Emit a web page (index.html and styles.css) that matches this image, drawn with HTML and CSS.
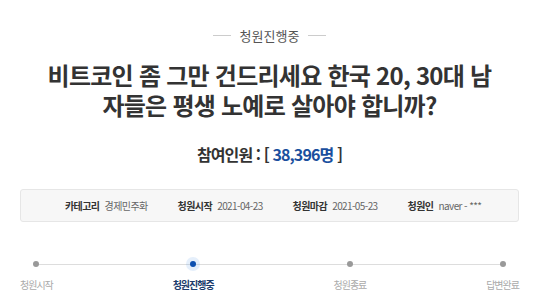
FILE: index.html
```html
<!DOCTYPE html>
<html lang="ko">
<head>
  <meta charset="UTF-8">
  <title>청원진행중</title>
  <link rel="stylesheet" href="styles.css">
</head>
<body>
  <div class="petition">
    <div class="status"><span>청원진행중</span></div>

    <h1 class="title">비트코인 좀 그만 건드리세요 한국 20, 30대 남<br>자들은 평생 노예로 살아야 합니까?</h1>

    <div class="count">참여인원 : [ <span class="num">38,396명</span> ]</div>

    <ul class="info">
      <li><b>카테고리</b> 경제민주화</li>
      <li><b>청원시작</b> 2021-04-23</li>
      <li><b>청원마감</b> 2021-05-23</li>
      <li><b>청원인</b> naver - ***</li>
    </ul>

    <ol class="steps">
      <li>청원시작</li>
      <li class="on">청원진행중</li>
      <li>청원종료</li>
      <li>답변완료</li>
    </ol>
  </div>
</body>
</html>
```

FILE: styles.css
```css
body {
  margin: 0;
  background: #fff;
  color: #333;
  font-family: 'Noto Sans CJK KR', 'Noto Sans', sans-serif;
}

.petition {
  width: 499px;
  margin: 0 22px 0 20px;
  padding-top: 26px;
}

/* status badge with rules on both sides */
.status {
  display: flex;
  justify-content: center;
  align-items: center;
  gap: 9px;
  font-size: 13px;
  color: #555;
  height: 18px;
}

.status::before,
.status::after {
  content: '';
  width: 18px;
  height: 1px;
  background: #ccc;
}

.title {
  margin: 16px 0 0;
  text-align: center;
  font-size: 24px;
  line-height: 30px;
  font-weight: bold;
  letter-spacing: -0.75px;
  color: #333;
}

.count {
  margin-top: 22px;
  text-align: center;
  font-size: 16px;
  font-weight: bold;
  letter-spacing: -0.9px;
  color: #333;
}

.count .num {
  color: #1a4f9e;
}

.info {
  list-style: none;
  margin: 23px 0 0;
  padding: 0 0 0 44px;
  height: 31px;
  display: flex;
  align-items: center;
  gap: 30px;
  background: #f7f7f7;
  border: 1px solid #e6e6e6;
  border-radius: 3px;
  font-size: 10px;
  color: #666;
  letter-spacing: -0.6px;
}

.info b {
  color: #333;
  margin-right: 3px;
}

.steps {
  list-style: none;
  margin: 39px 0 0;
  padding: 0;
  display: flex;
  justify-content: space-between;
  position: relative;
  font-size: 10px;
  letter-spacing: -1px;
  color: #aaa;
}

/* connecting line behind the dots */
.steps::before {
  content: '';
  position: absolute;
  top: 3px;
  left: 17px;
  right: 17px;
  height: 1px;
  background: #ddd;
}

.steps li {
  position: relative;
  display: flex;
  flex-direction: column;
  align-items: center;
  gap: 10px;
}

.steps li::before {
  content: '';
  width: 6px;
  height: 6px;
  border-radius: 50%;
  background: #999;
}

.steps li.on {
  color: #1c3c6c;
  font-weight: bold;
}

.steps li.on::before {
  background: #0d50b0;
  box-shadow: 0 0 0 4px rgba(80, 150, 230, 0.15);
}
```
